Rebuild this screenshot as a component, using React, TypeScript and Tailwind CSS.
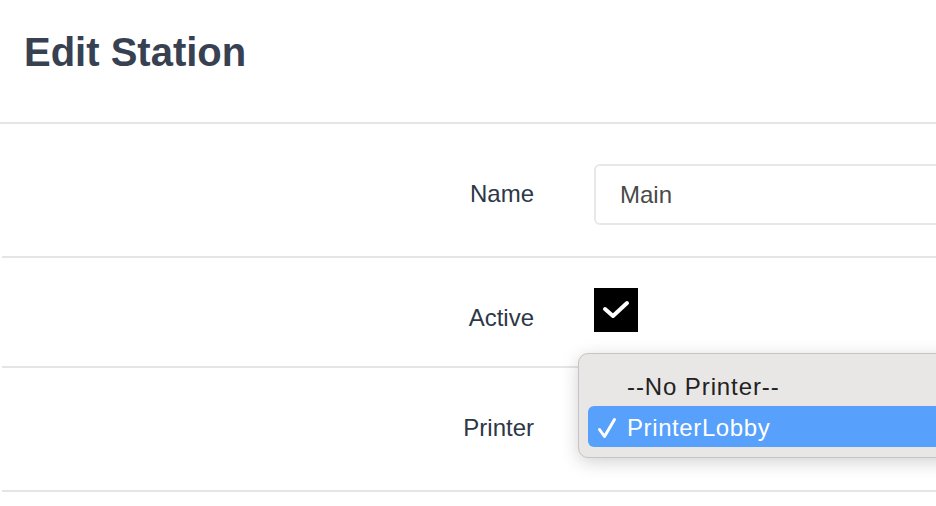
import React from "react";

// 編集フォーム: ステーション
const font = { fontFamily: '"Liberation Sans", Arial, sans-serif' };

const CheckIcon = () => (
  <svg width="44" height="44" viewBox="0 0 44 44">
    <path
      d="M11 21 L19 28 L33 15"
      fill="none"
      stroke="#fff"
      strokeWidth="4"
      strokeLinecap="round"
      strokeLinejoin="round"
    />
  </svg>
);

const MenuCheck = () => (
  <svg width="20" height="22" viewBox="0 0 20 22">
    <path
      d="M2.5 12.5 L7.5 19.5 L17.5 2.5"
      fill="none"
      stroke="#fff"
      strokeWidth="3"
      strokeLinecap="round"
      strokeLinejoin="round"
    />
  </svg>
);

const App = () => {
  return (
    <div
      className="w-[936px] h-[506px] overflow-hidden bg-white relative"
      style={font}
    >
      <div className="h-[124px] pt-[32px] pl-[24px] border-b-2 border-[#e5e5e5]">
        <h1 className="text-[40px] leading-[40px] font-bold text-[#374151]">
          Edit Station
        </h1>
      </div>

      <div className="ml-[2px]">
        {/* Name */}
        <div className="flex h-[134px] border-b-2 border-[#e5e5e5]">
          <label className="w-[532px] shrink-0 text-right pt-[56px] text-[24px] leading-[28px] text-[#2d3748]">
            Name
          </label>
          <div className="ml-[60px] pt-[40px]">
            <input
              defaultValue="Main"
              className="w-[420px] h-[61px] border-2 border-[#e8e8e8] rounded-[6px] px-[24px] text-[24px] text-[#4a4a4a] outline-none"
            />
          </div>
        </div>

        {/* Active */}
        <div className="flex h-[110px] border-b-2 border-[#e5e5e5]">
          <label className="w-[532px] shrink-0 text-right pt-[46px] text-[24px] leading-[28px] text-[#2d3748]">
            Active
          </label>
          <div className="ml-[60px] pt-[30px]">
            <div className="w-[44px] h-[44px] bg-black">
              <CheckIcon />
            </div>
          </div>
        </div>

        {/* Printer */}
        <div className="flex h-[124px] border-b-2 border-[#e5e5e5]">
          <label className="w-[532px] shrink-0 text-right pt-[46px] text-[24px] leading-[28px] text-[#2d3748]">
            Printer
          </label>
          <div className="ml-[60px] relative flex-1">
            <div className="absolute left-[-16px] top-[-15px] w-[420px] h-[105px] bg-[#e8e7e5] border border-[#c4c4c4] rounded-[10px] shadow-[0_4px_18px_rgba(0,0,0,0.18)] py-[10px] px-[9px]">
              <div className="h-[42px] flex items-center pt-[3px] pl-[39px] text-[24px] tracking-[0.9px] text-[#222]">
                --No Printer--
              </div>
              <div className="h-[41px] flex items-center bg-[#57a0fc] rounded-[6px] text-white text-[24px] tracking-[0.6px]">
                <span className="w-[39px] pl-[9px] pt-[2px] flex items-center">
                  <MenuCheck />
                </span>
                <span className="pt-[3px]">PrinterLobby</span>
              </div>
            </div>
          </div>
        </div>
      </div>
    </div>
  );
};

export default App;
